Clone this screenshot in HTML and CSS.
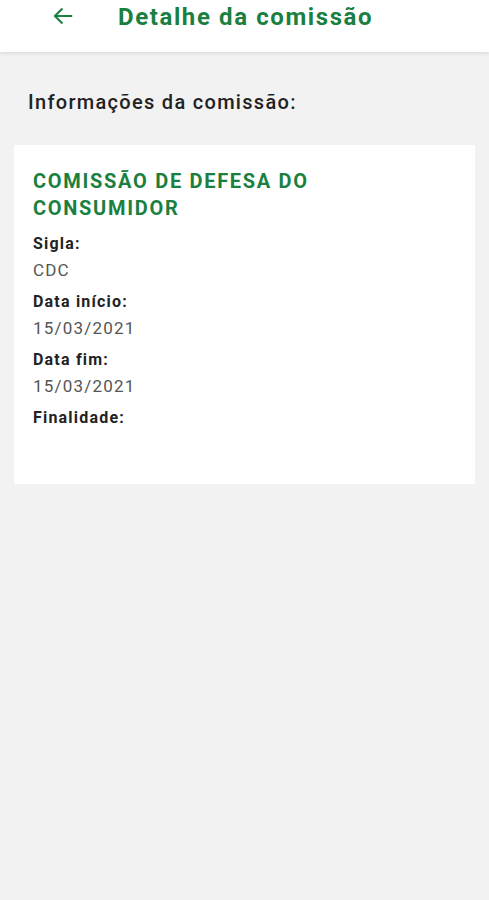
FILE: index.html
```html
<!DOCTYPE html>
<html lang="pt">
<head>
<meta charset="utf-8">
<link rel="stylesheet" href="styles.css">
</head>
<body>
<header class="appbar">
  <svg class="back" width="26" height="26" viewBox="0 0 24 24"><path d="M20.5 12H4.5M11.5 5l-7 7 7 7" fill="none" stroke="#1a7f3f" stroke-width="1.9"/></svg>
  <h1 class="title">Detalhe da comissão</h1>
</header>
<main class="content">
  <h2 class="section">Informações da comissão:</h2>
  <section class="card">
    <h3 class="name">COMISSÃO DE DEFESA DO CONSUMIDOR</h3>
    <dl class="fields">
      <dt>Sigla:</dt>
      <dd>CDC</dd>
      <dt>Data início:</dt>
      <dd>15/03/2021</dd>
      <dt>Data fim:</dt>
      <dd>15/03/2021</dd>
      <dt>Finalidade:</dt>
      <dd></dd>
    </dl>
  </section>
</main>
</body>
</html>
```
FILE: styles.css
```css
html, body {
  margin: 0;
  padding: 0;
  background: #f2f2f2;
  font-family: Roboto, "Noto Sans", sans-serif;
}
.appbar {
  height: 52px;
  background: #fff;
  display: flex;
  align-items: center;
  box-shadow: 0 1px 4px rgba(0,0,0,0.12);
  position: relative;
}
.back {
  margin-left: 50px;
  margin-top: -20px;
}
.title {
  margin: 0 0 0 42px;
  margin-top: -19px;
  font-size: 24px;
  font-weight: 700;
  letter-spacing: 1.6px;
  color: #1a7f3f;
}
.content {
  padding: 0 14px;
}
.section {
  margin: 36px 0 0 14px;
  font-size: 20px;
  font-weight: 500;
  letter-spacing: 1.3px;
  color: #222;
  line-height: 28px;
}
.card {
  margin-top: 29px;
  background: #fff;
  padding: 23px 19px 40px;
  height: 276px;
}
.name {
  margin: 0;
  font-size: 20px;
  font-weight: 700;
  letter-spacing: 1.7px;
  color: #1a7f3f;
  line-height: 27px;
  width: 330px;
}
.fields {
  margin: 9px 0 0;
}
.fields dt {
  font-size: 16px;
  font-weight: 700;
  letter-spacing: 1.2px;
  color: #222;
  line-height: 26px;
}
.fields dd {
  margin: 0 0 6px;
  font-size: 17px;
  letter-spacing: 1.2px;
  color: #555;
  line-height: 26px;
}
```
